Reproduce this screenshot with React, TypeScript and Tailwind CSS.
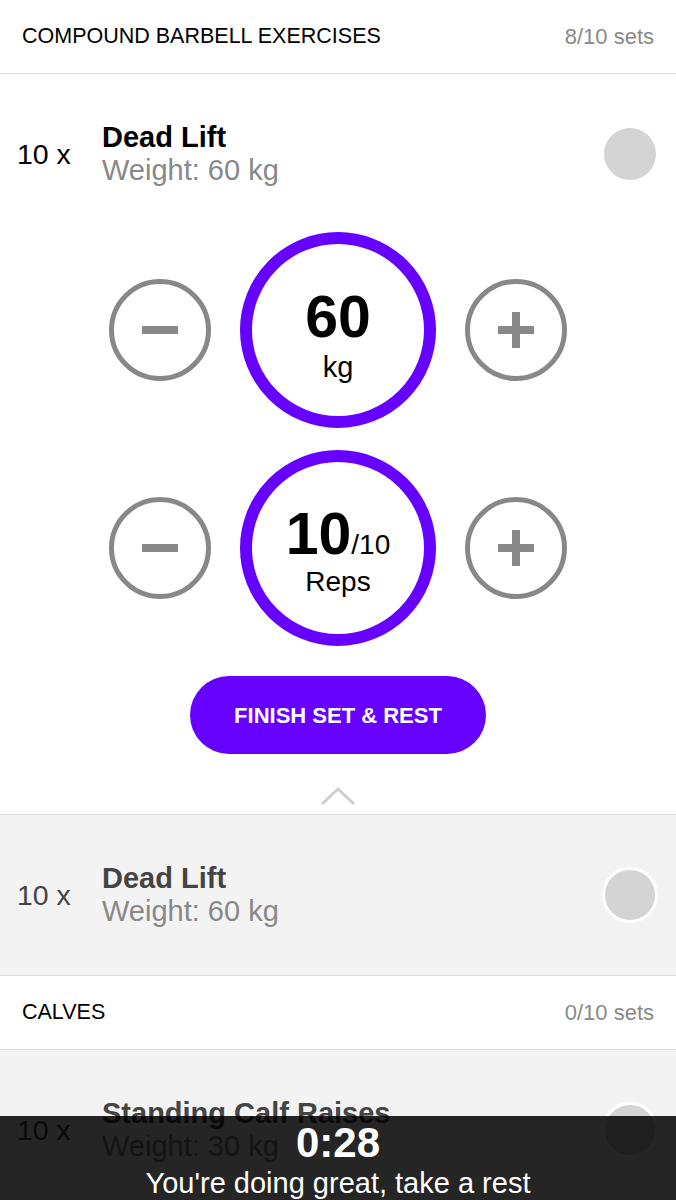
type Ex = { reps: number; name: string; weight: number }

function SectionHeader({ title, done }: { title: string; done: string }) {
    return (
        <div className="h-[74px] px-[22px] flex items-center justify-between border-b border-[#dddddd] bg-white">
            <span className="text-[21.5px] text-black">{title}</span>
            <span className="text-[22px] text-[#8a8a8a]">{done}</span>
        </div>
    )
}

function ExerciseRow({ ex, muted }: { ex: Ex; muted?: boolean }) {
    return (
        <div className={`h-[160px] flex items-center pl-[17px] pr-[18px] ${muted ? 'bg-[#f3f3f3]' : 'bg-white'}`}>
            <span className={`w-[85px] text-[28.5px] ${muted ? 'text-[#444]' : 'text-black'}`}>{ex.reps} x</span>
            <div className="flex-1 flex flex-col leading-[33px]">
                <span className={`text-[29px] font-bold ${muted ? 'text-[#444]' : 'text-black'}`}>{ex.name}</span>
                <span className="text-[29px] text-[#888]">Weight: {ex.weight} kg</span>
            </div>
            {muted ? (
                <div className="w-[56px] h-[56px] rounded-full bg-[#d4d4d4] border-[3px] border-white" />
            ) : (
                <div className="w-[52px] h-[52px] mr-[2px] rounded-full bg-[#d4d4d4]" />
            )}
        </div>
    )
}

function RoundBtn({ plus }: { plus?: boolean }) {
    return (
        <button className="relative w-[102px] h-[102px] rounded-full border-[5px] border-[#888] flex items-center justify-center">
            <span className="w-[36px] h-[8px] bg-[#888]" />
            {plus && <span className="absolute w-[8px] h-[36px] bg-[#888]" />}
        </button>
    )
}

function Stepper({ children }: { children: React.ReactNode }) {
    return (
        <div className="flex items-center justify-center gap-[29px]">
            <RoundBtn />
            <div className="w-[196px] h-[196px] rounded-full border-[12px] border-[#6600ff] flex flex-col items-center justify-center">
                {children}
            </div>
            <RoundBtn plus />
        </div>
    )
}

export default function App() {
    const dead: Ex = { reps: 10, name: 'Dead Lift', weight: 60 }
    const calf: Ex = { reps: 10, name: 'Standing Calf Raises', weight: 30 }

    return (
        <div className="relative h-[1200px] overflow-hidden bg-white [font-family:'Liberation_Sans',Arial,sans-serif]">
            <SectionHeader title="COMPOUND BARBELL EXERCISES" done="8/10 sets" />
            <ExerciseRow ex={dead} />

            <div className="flex flex-col gap-[22px] -mt-[2px]">
                <Stepper>
                    <span className="text-[59px] font-bold leading-[60px] text-black mt-[14px]">60</span>
                    <span className="text-[29px] leading-[40px] text-black">kg</span>
                </Stepper>
                <Stepper>
                    <div className="flex items-baseline leading-none text-black mt-[5px]">
                        <span className="text-[59px] font-bold">10</span>
                        <span className="text-[28px]">/10</span>
                    </div>
                    <span className="text-[28px] leading-none mt-[4px] text-black">Reps</span>
                </Stepper>
            </div>

            <div className="flex justify-center mt-[30px]">
                <button className="w-[296px] h-[78px] rounded-full bg-[#6600ff] text-white text-[22px] font-bold">
                    FINISH SET &amp; REST
                </button>
            </div>

            <div className="flex justify-center h-[60px] items-center pt-[24px]">
                <svg width="36" height="20" viewBox="0 0 36 20" fill="none">
                    <polyline points="2,18 18,3 34,18" stroke="#cfcfcf" strokeWidth="3" />
                </svg>
            </div>

            <div className="border-t border-b border-[#dddddd]">
                <ExerciseRow ex={dead} muted />
            </div>
            <SectionHeader title="CALVES" done="0/10 sets" />
            <ExerciseRow ex={calf} muted />

            <div className="absolute left-0 right-0 bottom-0 h-[84px] bg-black/85 flex flex-col items-center text-white">
                <span className="text-[42px] font-bold leading-[46px] mt-[4px]">0:28</span>
                <span className="text-[29px] leading-[34px]">You&apos;re doing great, take a rest</span>
            </div>
        </div>
    )
}
